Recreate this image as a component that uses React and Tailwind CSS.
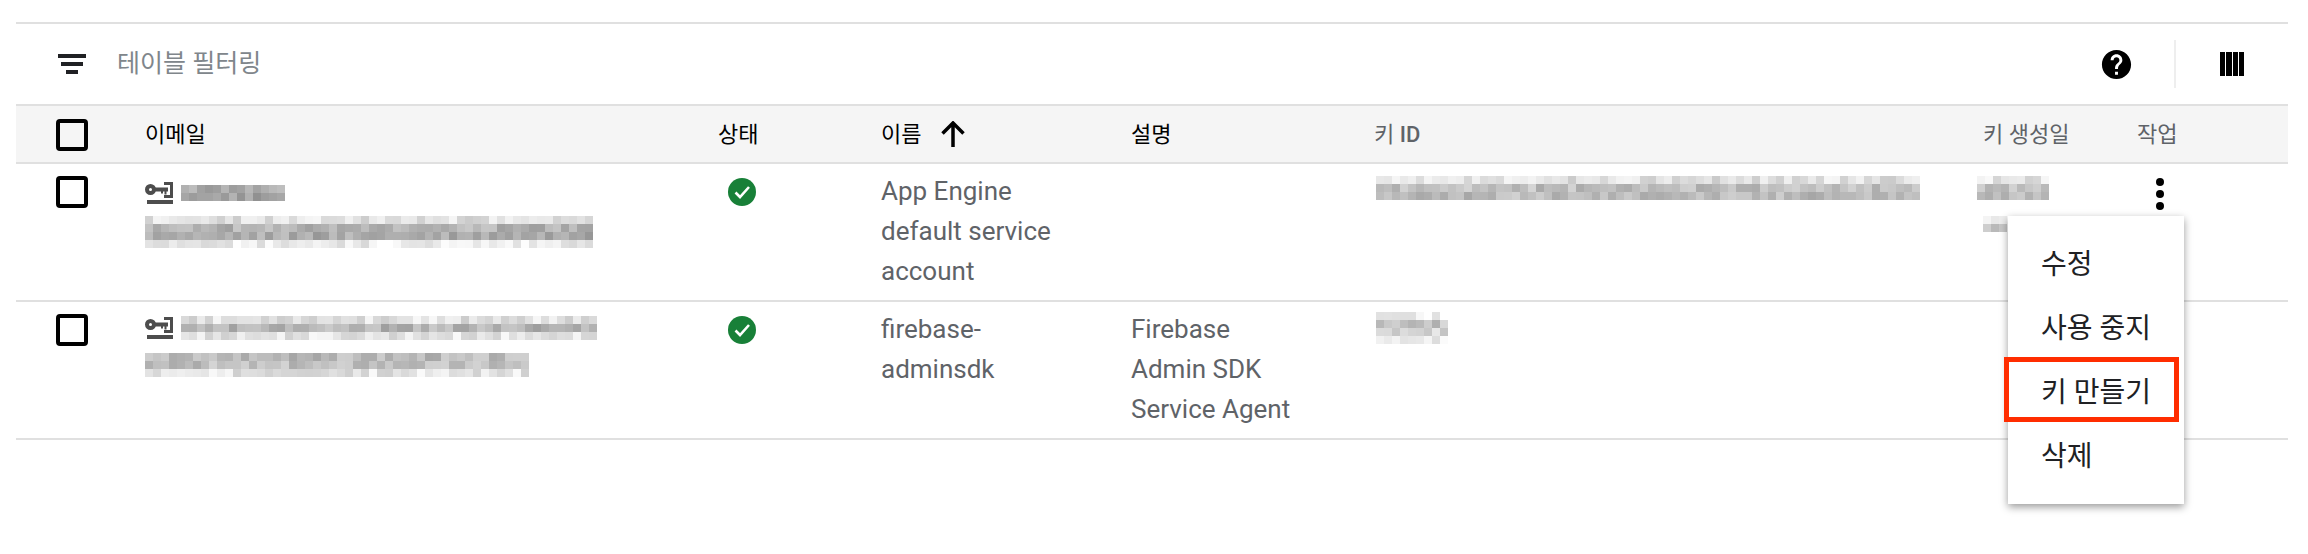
const seeded = (seed) => {
  let s = seed;
  return () => {
    s = (s * 9301 + 49297) % 233280;
    return s / 233280;
  };
};

// redacted text: rows of gray blocks
const Mosaic = ({ cols, levels, seed, className = "" }) => {
  const rand = seeded(seed);
  const cell = 8;
  return (
    <svg
      width={cols * cell}
      height={levels.length * cell}
      shapeRendering="crispEdges"
      className={`block ${className}`}
    >
      {levels.map((base, r) =>
        Array.from({ length: cols }).map((_, c) => {
          const v = Math.min(255, Math.round(base + (rand() - 0.5) * 44));
          return (
            <rect
              key={`${r}-${c}`}
              x={c * cell}
              y={r * cell}
              width={cell}
              height={cell}
              fill={`rgb(${v},${v},${v})`}
            />
          );
        })
      )}
    </svg>
  );
};

const Checkbox = ({ className = "" }) => (
  <div className={`w-8 h-8 border-4 border-black rounded-[4px] ${className}`} />
);

const KeyIcon = () => (
  <svg width="28" height="22" viewBox="0 0 28 22" fill="#4d4d4d" className="block shrink-0">
    <path d="M19 0h9v16h-9v-3h6V3h-6z" />
    <circle cx="5.500" cy="7.500" r="3.500" fill="none" stroke="#4d4d4d" strokeWidth="4" />
    <path d="M9 5.500h14v4h-1.500v3h-2v-3h-1.500v2h-2v-2H9z" />
    <rect x="2" y="18" width="26" height="4" />
  </svg>
);

const StatusIcon = ({ className = "" }) => (
  <svg width="28" height="28" viewBox="0 0 28 28" className={`block ${className}`}>
    <circle cx="14" cy="14" r="14" fill="#188038" />
    <path d="M7.500 14.500l4.500 4.500 9-10" fill="none" stroke="#fff" strokeWidth="2.600" />
  </svg>
);

const gridCols = "grid grid-cols-[129px_573px_163px_250px_243px_609px_154px_1fr]";

const App = () => {
  return (
    <div className="relative w-[2308px] h-[554px] bg-white overflow-hidden font-['Roboto','Noto_Sans_CJK_KR',sans-serif]">
      <div className="ml-4 mr-5 pt-[22px]">
        {/* Filter bar */}
        <div className="h-[84px] border-t-2 border-b-2 border-[#e0e0e0] flex items-center box-border">
          <svg width="28" height="20" viewBox="0 0 28 20" fill="#202124" className="ml-[42px] shrink-0">
            <rect x="0" y="0" width="28" height="4" />
            <rect x="3" y="8" width="22" height="4" />
            <rect x="8" y="16" width="12" height="4" />
          </svg>
          <span className="ml-[31px] text-[25px] text-[#80868b]">테이블 필터링</span>
          <div className="ml-auto flex items-center h-12 mr-[44px]">
            <svg width="35" height="35" viewBox="0 0 24 24" fill="#000">
              <path d="M12 2C6.480 2 2 6.480 2 12s4.480 10 10 10 10-4.480 10-10S17.520 2 12 2zm1 17h-2v-2h2v2zm2.070-7.750l-.9.920C13.450 12.900 13 13.500 13 15h-2v-.5c0-1.100.45-2.100 1.170-2.830l1.240-1.260c.37-.36.59-.86.59-1.410 0-1.100-.9-2-2-2s-2 .9-2 2H8c0-2.210 1.790-4 4-4s4 1.790 4 4c0 .88-.36 1.680-.93 2.250z" />
            </svg>
            <div className="w-0.5 h-12 bg-[#eeeeee] ml-[40px]" />
            <svg width="24" height="24" viewBox="0 0 24 24" fill="#000" shapeRendering="crispEdges" className="ml-[44px]">
              <rect x="0" y="0" width="5" height="24" />
              <rect x="6" y="0" width="6" height="24" />
              <rect x="13" y="0" width="5" height="24" />
              <rect x="19" y="0" width="5" height="24" />
            </svg>
          </div>
        </div>

        {/* Header */}
        <div className={`${gridCols} h-[58px] items-center bg-[#f5f5f5] border-b-2 border-[#e0e0e0] text-[22px] text-black`}>
          <Checkbox className="ml-10 mt-0.5" />
          <span>이메일</span>
          <span>상태</span>
          <span className="flex items-center">
            이름
            <svg width="24" height="26" viewBox="0 0 24 26" fill="none" stroke="#000" strokeWidth="3.500" className="ml-5">
              <path d="M12 26V2M1.500 12.500L12 2l10.500 10.500" />
            </svg>
          </span>
          <span>설명</span>
          <span className="text-[#5f6368]">
            키 <span className="font-medium">ID</span>
          </span>
          <span className="text-[#5f6368]">키 생성일</span>
          <span className="text-[#5f6368]">작업</span>
        </div>

        {/* Row 1 */}
        <div className={`${gridCols} h-[138px] border-b-2 border-[#e0e0e0] text-[26px] leading-[40px] text-[#5f6368] box-border`}>
          <Checkbox className="ml-10 mt-3" />
          <div className="pt-[18px]">
            <div className="flex items-center gap-2">
              <KeyIcon />
              <Mosaic cols={13} levels={[170, 165]} seed={11} />
            </div>
            <Mosaic cols={56} levels={[225, 178, 172, 238]} seed={23} className="mt-3" />
          </div>
          <StatusIcon className="ml-[10px] mt-[14px]" />
          <div className="pt-[7px] w-[200px]">App Engine default service account</div>
          <div />
          <Mosaic cols={68} levels={[224, 192, 188]} seed={37} className="mt-3 ml-0.5" />
          <div className="pt-3">
            <Mosaic cols={9} levels={[228, 195, 185]} seed={41} className="-ml-1.5" />
            <Mosaic cols={3} levels={[225, 185]} seed={43} className="mt-4" />
          </div>
          <div className="pl-[19px] pt-[14px] flex flex-col gap-1">
            <div className="w-2 h-2 rounded-full bg-black" />
            <div className="w-2 h-2 rounded-full bg-black" />
            <div className="w-2 h-2 rounded-full bg-black" />
          </div>
        </div>

        {/* Row 2 */}
        <div className={`${gridCols} h-[138px] border-b-2 border-[#e0e0e0] text-[26px] leading-[40px] text-[#5f6368] box-border`}>
          <Checkbox className="ml-10 mt-3" />
          <div className="pt-[14px]">
            <div className="flex items-center gap-2">
              <KeyIcon />
              <Mosaic cols={52} levels={[225, 180, 228]} seed={53} />
            </div>
            <Mosaic cols={48} levels={[188, 192, 228]} seed={67} className="mt-[13px]" />
          </div>
          <StatusIcon className="ml-[10px] mt-[14px]" />
          <div className="pt-[7px] w-[160px]">firebase-adminsdk</div>
          <div className="pt-[7px] w-[200px]">
            Firebase
            <br />
            Admin SDK
            <br />
            Service Agent
          </div>
          <Mosaic cols={9} levels={[245, 195, 210, 235]} seed={71} className="mt-[10px] ml-0.5" />
          <div />
          <div />
        </div>
      </div>

      {/* Row actions menu */}
      <div className="absolute left-[2008px] top-[216px] w-44 h-[288px] bg-white pt-[17px] shadow-[0_3px_8px_rgba(0,0,0,0.4)] text-[28px] text-[#202124]">
        {["수정", "사용 중지", "키 만들기", "삭제"].map((label) => (
          <div key={label} className="h-16 flex items-center pl-[33px]">
            {label}
          </div>
        ))}
      </div>

      {/* Annotation box */}
      <div className="absolute left-[2004px] top-[357px] w-[175px] h-[65px] border-[5px] border-[#ff2d00]" />
    </div>
  );
};

export default App;
